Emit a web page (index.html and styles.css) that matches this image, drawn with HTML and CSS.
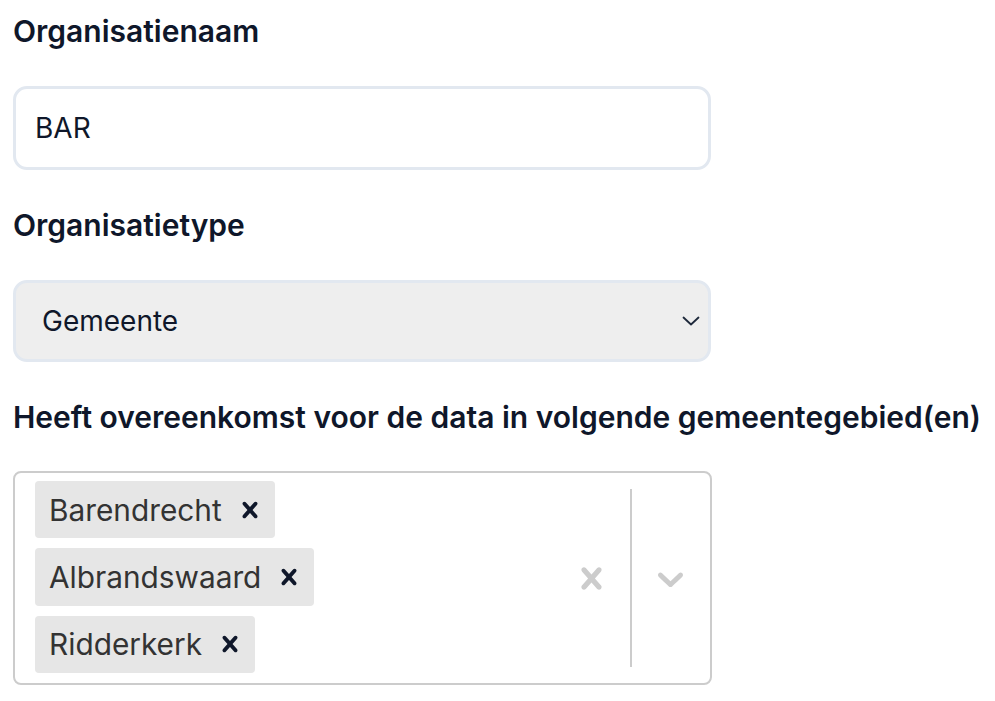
FILE: index.html
```html
<!DOCTYPE html>
<html lang="nl">
<head>
<meta charset="utf-8">
<title>Organisatie</title>
<link rel="stylesheet" href="styles.css">
</head>
<body>
<form class="form">
  <div class="field">
    <label class="label">Organisatienaam</label>
    <div class="input"><span class="input-text">BAR</span></div>
  </div>
  <div class="field">
    <label class="label">Organisatietype</label>
    <div class="select">
      <span class="select-text">Gemeente</span>
      <svg class="select-chevron" viewBox="0 0 18 10" width="18" height="10"><polyline points="1.5,1.5 9,8.5 16.5,1.5" fill="none" stroke="#1e293b" stroke-width="1.8" stroke-linecap="round" stroke-linejoin="round"/></svg>
    </div>
  </div>
  <div class="field">
    <label class="label">Heeft overeenkomst voor de data in volgende gemeentegebied(en)</label>
    <div class="multi">
      <div class="values">
        <div class="chip"><span class="chip-label">Barendrecht</span><span class="chip-remove"><svg viewBox="0 0 20 20" width="32" height="32"><path d="M14.348 14.849c-0.469 0.469-1.229 0.469-1.697 0l-2.651-3.030-2.651 3.029c-0.469 0.469-1.229 0.469-1.697 0-0.469-0.469-0.469-1.229 0-1.697l2.758-3.15-2.759-3.152c-0.469-0.469-0.469-1.228 0-1.697s1.228-0.469 1.697 0l2.652 3.031 2.651-3.031c0.469-0.469 1.228-0.469 1.697 0s0.469 1.229 0 1.697l-2.758 3.152 2.758 3.15c0.469 0.469 0.469 1.229 0 1.698z"/></svg></span></div>
        <div class="chip"><span class="chip-label">Albrandswaard</span><span class="chip-remove"><svg viewBox="0 0 20 20" width="32" height="32"><path d="M14.348 14.849c-0.469 0.469-1.229 0.469-1.697 0l-2.651-3.030-2.651 3.029c-0.469 0.469-1.229 0.469-1.697 0-0.469-0.469-0.469-1.229 0-1.697l2.758-3.15-2.759-3.152c-0.469-0.469-0.469-1.228 0-1.697s1.228-0.469 1.697 0l2.652 3.031 2.651-3.031c0.469-0.469 1.228-0.469 1.697 0s0.469 1.229 0 1.697l-2.758 3.152 2.758 3.15c0.469 0.469 0.469 1.229 0 1.698z"/></svg></span></div>
        <div class="chip"><span class="chip-label">Ridderkerk</span><span class="chip-remove"><svg viewBox="0 0 20 20" width="32" height="32"><path d="M14.348 14.849c-0.469 0.469-1.229 0.469-1.697 0l-2.651-3.030-2.651 3.029c-0.469 0.469-1.229 0.469-1.697 0-0.469-0.469-0.469-1.229 0-1.697l2.758-3.15-2.759-3.152c-0.469-0.469-0.469-1.228 0-1.697s1.228-0.469 1.697 0l2.652 3.031 2.651-3.031c0.469-0.469 1.228-0.469 1.697 0s0.469 1.229 0 1.697l-2.758 3.152 2.758 3.15c0.469 0.469 0.469 1.229 0 1.698z"/></svg></span></div>
      </div>
      <div class="indicators">
        <div class="indicator"><svg viewBox="0 0 20 20" width="43" height="43"><path d="M14.348 14.849c-0.469 0.469-1.229 0.469-1.697 0l-2.651-3.030-2.651 3.029c-0.469 0.469-1.229 0.469-1.697 0-0.469-0.469-0.469-1.229 0-1.697l2.758-3.15-2.759-3.152c-0.469-0.469-0.469-1.228 0-1.697s1.228-0.469 1.697 0l2.652 3.031 2.651-3.031c0.469-0.469 1.228-0.469 1.697 0s0.469 1.229 0 1.697l-2.758 3.152 2.758 3.15c0.469 0.469 0.469 1.229 0 1.698z"/></svg></div>
        <span class="separator"></span>
        <div class="indicator indicator--dropdown"><svg viewBox="0 0 20 20" width="43" height="43"><path d="M4.516 7.548c0.436-0.446 1.043-0.481 1.576 0l3.908 3.747 3.908-3.747c0.533-0.481 1.141-0.446 1.574 0 0.436 0.445 0.408 1.197 0 1.615-0.406 0.418-4.695 4.502-4.695 4.502-0.217 0.223-0.502 0.335-0.787 0.335s-0.57-0.112-0.789-0.335c0 0-4.287-4.084-4.695-4.502s-0.436-1.170 0-1.615z"/></svg></div>
      </div>
    </div>
  </div>
</form>
</body>
</html>
```

FILE: styles.css
```css
* { box-sizing: border-box; }
html, body { margin: 0; padding: 0; background: #ffffff; }
body { font-family: Inter, "Noto Sans", sans-serif; color: #0f172a; }

.form {
  display: flex;
  flex-direction: column;
  gap: 35px;
  padding: 11px 13px 0 13px;
  width: 995px;
}

.field { display: flex; flex-direction: column; gap: 35px; }

.label {
  font-size: 30px;
  line-height: 40px;
  font-weight: 600;
  color: #0f172a;
  white-space: nowrap;
}

.input, .select {
  width: 698px;
  border: 3px solid #e2e8f0;
  border-radius: 14px;
  display: flex;
  align-items: center;
  font-size: 28px;
  color: #0f172a;
}

.input { height: 84px; padding: 0 19px; background: #fff; }

.select {
  height: 82px;
  padding: 0 8px 0 26px;
  background: #eeeeee;
  justify-content: space-between;
}

.select-chevron { display: block; }

.multi {
  width: 699px;
  min-height: 214px;
  margin-top: -1px;
  border: 2px solid #cccccc;
  border-radius: 8px;
  display: flex;
  align-items: stretch;
  background: #fff;
}

.values {
  flex: 1;
  display: flex;
  flex-direction: column;
  align-items: flex-start;
  padding: 3px 16px 5px 16px;
}

.chip {
  display: flex;
  align-items: center;
  background: #e6e6e6;
  border-radius: 4px;
  margin: 5px 4px;
  height: 57.33px;
}

.chip-label {
  font-size: 29.8px;
  color: #333333;
  padding: 0 12px 0 14px;
}

.chip-remove {
  display: flex;
  align-items: center;
  padding: 0 9px 0 0;
  fill: #0f172a;
}

.chip-remove svg { display: block; }

.indicators {
  display: flex;
  align-items: stretch;
}

.indicator {
  display: flex;
  align-items: center;
  padding: 0 17px;
  fill: #cccccc;
}

.indicator--dropdown { padding: 0 18px 0 17px; }

.indicator svg { display: block; }

.separator {
  width: 2px;
  background: #cccccc;
  margin: 16px 0;
}
```
